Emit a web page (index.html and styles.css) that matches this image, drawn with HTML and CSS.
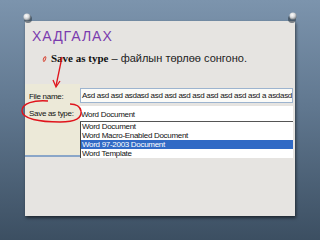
FILE: index.html
```html
<!DOCTYPE html>
<html lang="mn">
<head>
    <meta charset="UTF-8">
    <title>Хадгалах</title>
    <link rel="stylesheet" href="styles.css">
</head>
<body>

<div class="paper">
    <h1 class="title">ХАДГАЛАХ</h1>
    <p class="point"><span class="bullet"></span><b>Save as type</b> – файлын төрлөө сонгоно.</p>

    <div class="shot">
        <div class="labels">
            <span class="label label-name">File name:</span>
            <span class="label">Save as type:</span>
        </div>
        <div class="fields">
            <div class="input">Asd asd asd asdasd asd asd asd asd asd asd asd asd a asdasd</div>
            <div class="combo">Word Document</div>
            <ul class="list">
                <li>Word Document</li>
                <li>Word Macro-Enabled Document</li>
                <li class="selected">Word 97-2003 Document</li>
                <li>Word Template</li>
            </ul>
        </div>
    </div>
</div>

<!-- pins and red pen marks drawn over the slide -->
<svg class="marks" width="320" height="240" viewBox="0 0 320 240">
    <defs>
        <radialGradient id="pin" cx="40%" cy="35%" r="70%">
            <stop offset="0" stop-color="#ffffff"/>
            <stop offset="0.5" stop-color="#d8dadc"/>
            <stop offset="1" stop-color="#6d7378"/>
        </radialGradient>
    </defs>
    <circle cx="28" cy="19" r="4" fill="#2d3a46" opacity="0.6"/>
    <circle cx="27" cy="17" r="3.6" fill="url(#pin)"/>
    <circle cx="292" cy="19" r="4" fill="#2d3a46" opacity="0.6"/>
    <circle cx="293" cy="16" r="3.6" fill="url(#pin)"/>

    <path d="M62 57 L56 86" stroke="#e0141c" stroke-width="1.3" fill="none"/>
    <path d="M53 80 L56 87 L60 81" stroke="#e0141c" stroke-width="1.3" fill="none"/>
    <path d="M48 101 C34 100 22 103 22 111 C22 119 40 122 60 122 C76 122 82 118 81 111 C80 106 76 104 70 104"
          stroke="#e0141c" stroke-width="1.4" fill="none"/>
</svg>

</body>
</html>
```

FILE: styles.css
```css
* {
    box-sizing: border-box;
    margin: 0;
    padding: 0;
}

body {
    position: relative;
    width: 320px;
    height: 240px;
    overflow: hidden;
    font-family: 'Liberation Sans', Arial, sans-serif;
    background: linear-gradient(180deg, #7c94ad 0%, #60778f 45%, #3c4f62 100%);
    padding: 21px 25px 0;
}

.paper {
    height: 195px;
    background-color: #e6e4e1;
    box-shadow: 1px 2px 3px rgba(0, 0, 0, 0.55);
}

.title {
    padding: 7px 0 0 7px;
    font-size: 14px;
    line-height: 16px;
    font-weight: normal;
    letter-spacing: 1px;
    color: #7a3cae;
}

.point {
    display: flex;
    align-items: center;
    margin-top: 8px;
    padding-left: 18px;
    font-size: 11px;
    line-height: 13px;
    color: #222;
}

.point b {
    font-family: 'Liberation Serif', serif;
    font-size: 11px;
    margin-right: 3px;
    color: #111;
}

.bullet {
    width: 3px;
    height: 6px;
    margin-right: 5px;
    border: 1px solid #d64a3a;
    border-radius: 50%;
    transform: rotate(25deg);
}

/* the dialog screenshot */
.shot {
    display: flex;
    margin-top: 19px;
    padding-right: 2px;
    font-size: 8px;
    letter-spacing: -0.3px;
    color: #111;
}

.labels {
    display: flex;
    flex-direction: column;
    width: 55px;
    height: 73px;
    padding: 8px 0 0 4px;
    background-color: #ece9d8;
    border-bottom: 2px solid #8aa6c8;
    white-space: nowrap;
}

.label {
    line-height: 10px;
}

.label-name {
    margin-bottom: 7px;
}

.fields {
    flex: 1;
    padding-top: 4px;
    min-width: 0;
}

.input {
    height: 15px;
    line-height: 13px;
    padding-left: 1px;
    border: 1px solid #9db4cf;
    background-color: #fbfbf8;
    white-space: nowrap;
    overflow: hidden;
}

.combo {
    height: 16px;
    margin-top: 3px;
    line-height: 17px;
    padding-left: 1px;
    background-color: #fff;
    border-bottom: 1px solid #555;
}

.list {
    list-style: none;
    background-color: #fff;
    border-left: 1px solid #444;
}

.list li {
    height: 9px;
    line-height: 9px;
    padding-left: 1px;
    white-space: nowrap;
}

.list .selected {
    background-color: #316ac5;
    color: #fff;
}

.marks {
    position: absolute;
    top: 0;
    left: 0;
    pointer-events: none;
}
```
